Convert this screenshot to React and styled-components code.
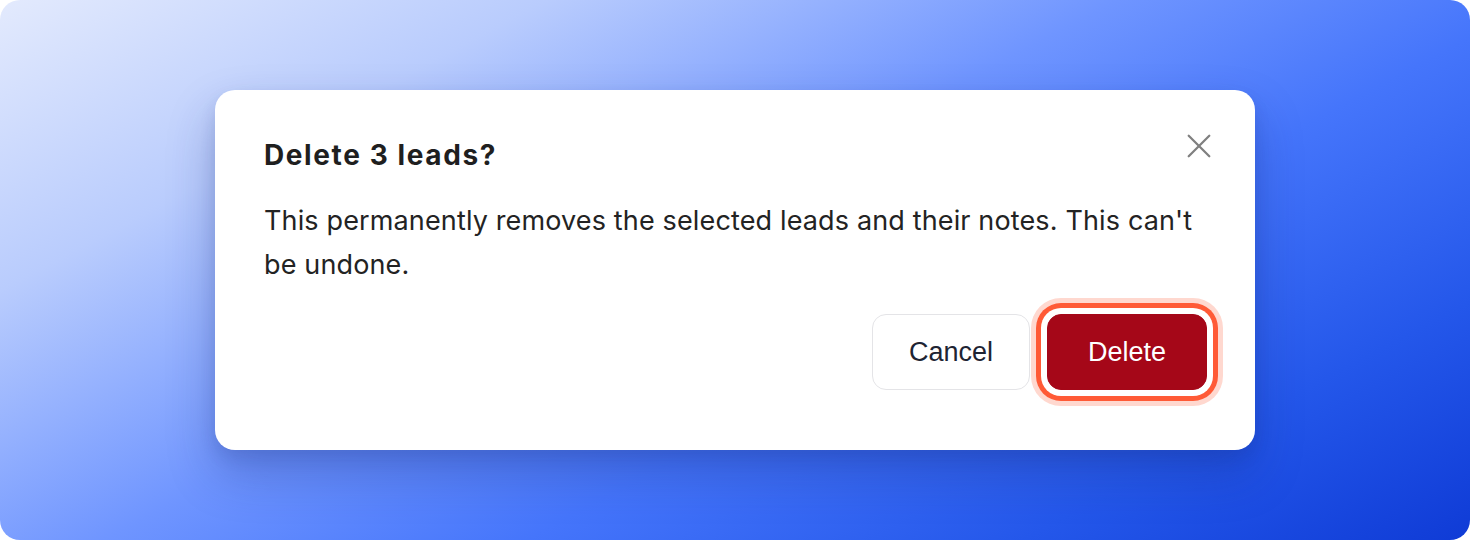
import React from 'react'
import styled, { createGlobalStyle } from 'styled-components'

const Global = createGlobalStyle`
  html, body { margin: 0; padding: 0; background: #ffffff; }
  body { font-family: Inter, "Noto Sans", sans-serif; }
`

const Stage = styled.div`
  width: 1470px;
  height: 540px;
  border-radius: 20px;
  overflow: hidden;
  background: linear-gradient(152deg, #e3eafd 0%, #b9ccfd 22%, #6f95ff 45%, #4575fb 62%, #2457ea 82%, #0f3bd6 100%);
  display: flex;
  align-items: center;
  justify-content: center;
`

const Dialog = styled.div`
  width: 1040px;
  height: 360px;
  box-sizing: border-box;
  background: #ffffff;
  border-radius: 20px;
  padding: 47px 48px 60px 49px;
  display: flex;
  flex-direction: column;
  box-shadow: 0 24px 48px rgba(20, 40, 120, 0.28), 0 8px 16px rgba(20, 40, 120, 0.12);
`

const Header = styled.div`
  display: flex;
  align-items: flex-start;
  justify-content: space-between;
`

const Title = styled.h2`
  margin: 0;
  font-size: 28px;
  line-height: 36px;
  font-weight: 650;
  letter-spacing: 1.6px;
  color: #1f1f1f;
`

const Close = styled.button`
  border: 0;
  background: none;
  padding: 0;
  margin: -9px -10px 0 0;
  width: 36px;
  height: 36px;
  display: flex;
  align-items: center;
  justify-content: center;
  color: #808080;
  cursor: pointer;
`

const Body = styled.p`
  margin: 26px 0 0;
  font-size: 27px;
  line-height: 44px;
  letter-spacing: 0.14px;
  color: #232323;
`

const Footer = styled.div`
  margin-top: auto;
  display: flex;
  justify-content: flex-end;
  gap: 17px;
`

const Button = styled.button`
  font-family: "Liberation Sans", Arial, sans-serif;
  font-size: 27px;
  height: 76px;
  padding: 0 ${p => (p.$danger ? '40px' : '36px')};
  border-radius: 14px;
  cursor: pointer;
  border: 1px solid ${p => (p.$danger ? '#a50718' : '#e4e4e7')};
  background: ${p => (p.$danger ? '#a50718' : '#ffffff')};
  color: ${p => (p.$danger ? '#ffffff' : '#1e2433')};
  box-shadow: ${p => (p.$danger ? '0 0 0 6px #ffffff, 0 0 0 11px #ff5a36, 0 0 0 16px #ffd8cf' : 'none')};
`

export default function App() {
  return (
    <>
      <Global />
      <Stage>
        <Dialog>
          <Header>
            <Title>Delete 3 leads?</Title>
            <Close aria-label="Close">
              <svg width="26" height="26" viewBox="0 0 24 24" fill="none" stroke="currentColor" strokeWidth="2.1" strokeLinecap="round">
                <path d="M2.5 2.5L21.5 21.5M21.5 2.5L2.5 21.5" />
              </svg>
            </Close>
          </Header>
          <Body>This permanently removes the selected leads and their notes. This can't be undone.</Body>
          <Footer>
            <Button>Cancel</Button>
            <Button $danger>Delete</Button>
          </Footer>
        </Dialog>
      </Stage>
    </>
  )
}
